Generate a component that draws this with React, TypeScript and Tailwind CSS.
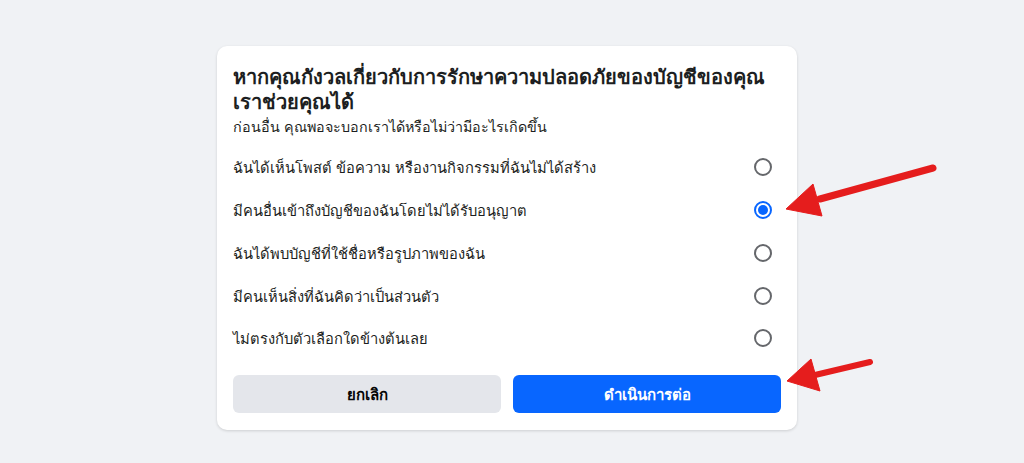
import React from "react";

const options = [
  "ฉันได้เห็นโพสต์ ข้อความ หรืองานกิจกรรมที่ฉันไม่ได้สร้าง",
  "มีคนอื่นเข้าถึงบัญชีของฉันโดยไม่ได้รับอนุญาต",
  "ฉันได้พบบัญชีที่ใช้ชื่อหรือรูปภาพของฉัน",
  "มีคนเห็นสิ่งที่ฉันคิดว่าเป็นส่วนตัว",
  "ไม่ตรงกับตัวเลือกใดข้างต้นเลย",
];

export default function App() {
  return (
    <div
      className="relative w-[1024px] h-[463px] bg-[#f0f2f5] overflow-hidden"
      style={{ fontFamily: '"Noto Sans", "Liberation Sans", "DejaVu Sans", sans-serif' }}
    >
      <div className="absolute left-[217px] top-[46px] w-[580px] bg-white rounded-[10px] shadow-[0_1px_3px_rgba(0,0,0,0.15)] px-4 pt-[18px] pb-[17px]">
        <h1 className="text-[20px] leading-[25px] font-bold text-[#1c1e21]">
          หากคุณกังวลเกี่ยวกับการรักษาความปลอดภัยของบัญชีของคุณ
          <br />
          เราช่วยคุณได้
        </h1>
        <p className="text-[14.3px] leading-[20px] text-[#1c1e21] mt-[3px]">
          ก่อนอื่น คุณพอจะบอกเราได้หรือไม่ว่ามีอะไรเกิดขึ้น
        </p>
        <div className="mt-[9px] flex flex-col">
          {options.map((o, i) => (
            <div key={i} className="h-[42.75px] flex items-center justify-between">
              <span className="text-[14.7px] text-[#1c1e21]">{o}</span>
              {i === 1 ? (
                <span className="mr-[9px] w-[18px] h-[18px] rounded-full border-2 border-[#0866ff] flex items-center justify-center">
                  <span className="w-[10px] h-[10px] rounded-full bg-[#0866ff]" />
                </span>
              ) : (
                <span className="mr-[9px] w-[18px] h-[18px] rounded-full border-2 border-[#65676b]" />
              )}
            </div>
          ))}
        </div>
        <div className="mt-[15px] flex gap-3">
          <button className="flex-1 h-[38px] rounded-[6px] bg-[#e4e6eb] text-[15px] font-bold text-[#050505]">
            ยกเลิก
          </button>
          <button className="flex-1 h-[38px] rounded-[6px] bg-[#0866ff] text-[15px] font-bold text-white">
            ดำเนินการต่อ
          </button>
        </div>
      </div>
      <svg className="absolute left-0 top-0" width="1024" height="463" viewBox="0 0 1024 463">
        <g fill="#e51d1d" stroke="#e51d1d">
          <line x1="933" y1="168" x2="820" y2="199" strokeWidth="7" strokeLinecap="round" />
          <polygon points="786,209 813,184 822,216" strokeWidth="1" strokeLinejoin="round" />
          <line x1="870" y1="362" x2="815" y2="375" strokeWidth="6" strokeLinecap="round" />
          <polygon points="787,381 811,359 820,391" strokeWidth="1" strokeLinejoin="round" />
        </g>
      </svg>
    </div>
  );
}
